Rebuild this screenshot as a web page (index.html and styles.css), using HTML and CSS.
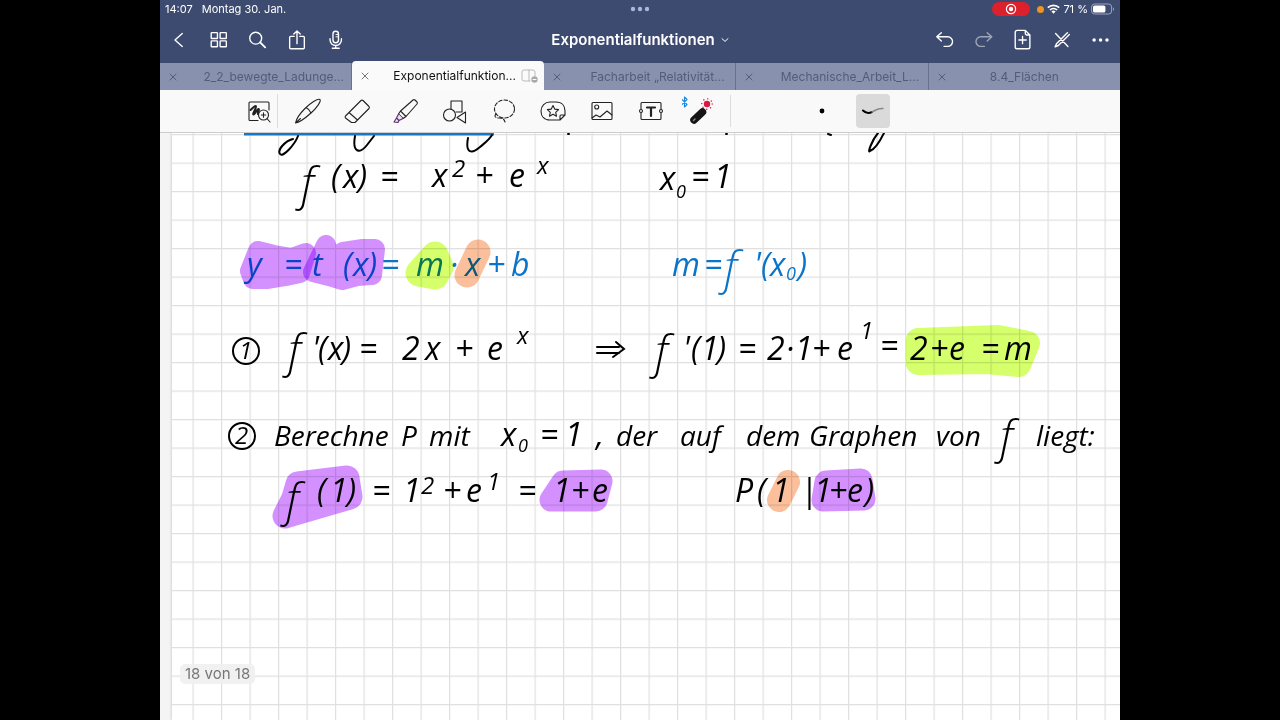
FILE: index.html
```html
<!DOCTYPE html>
<html lang="de">
  <head>
    <meta charset="utf-8" />
    <meta name="viewport" content="width=device-width, initial-scale=1.0" />
    <title>Exponentialfunktionen</title>
    <link rel="stylesheet" href="styles.css">
  </head>
  <body>
    <div id="app">
      <header>
        <div id="status">
          <div class="clock"><span>14:07</span><span>Montag 30. Jan.</span></div>
          <svg width="20" height="6" viewBox="0 0 20 6"><g fill="#a9b6e0"><circle cx="3" cy="3" r="2.2"/><circle cx="10" cy="3" r="2.2"/><circle cx="17" cy="3" r="2.2"/></g></svg>
          <div class="indicators">
            <span class="record"><svg width="12" height="12" viewBox="0 0 12 12"><circle cx="6" cy="6" r="4.6" fill="none" stroke="#fff" stroke-width="1.2"/><circle cx="6" cy="6" r="2.2" fill="#fff"/></svg></span>
            <span class="mic-dot"></span>
            <svg width="13" height="10" viewBox="0 0 13 10" fill="none" stroke="#fff" stroke-width="1.7"><path d="M.8 3.7a8.2 8.2 0 0 1 11.4 0M2.9 6a5.2 5.2 0 0 1 7.2 0"/><path d="M4.4 7.6a3 3 0 0 1 4.2 0L6.5 9.8z" fill="#fff" stroke="none"/></svg>
            <span>71 %</span>
            <svg width="24" height="12" viewBox="0 0 24 12"><rect x=".6" y="1" width="20" height="10" rx="3" fill="none" stroke="#9ba3bd"/><rect x="2" y="2.4" width="12.4" height="7.2" rx="1.6" fill="#fff"/><path d="M22 4.2c1.4.5 1.4 3.1 0 3.6z" fill="#9ba3bd"/></svg>
          </div>
        </div>

        <nav>
          <div class="actions">
            <button aria-label="Zurück"><svg viewBox="0 0 24 24"><path d="M14.500 5L6.500 12l8 7"/></svg></button>
            <button aria-label="Übersicht"><svg viewBox="0 0 24 24"><rect x="3.500" y="4" width="6.800" height="6.400" rx=".6"/><rect x="13.200" y="4" width="6.800" height="6.400" rx=".6"/><rect x="3.500" y="13" width="6.800" height="6.400" rx=".6"/><rect x="13.200" y="13" width="6.800" height="6.400" rx=".6"/></svg></button>
            <button aria-label="Suchen"><svg viewBox="0 0 24 24"><circle cx="9.500" cy="10" r="6.500"/><path d="M14.300 14.600l5.500 5.400" stroke-width="2"/></svg></button>
            <button aria-label="Teilen"><svg viewBox="0 0 24 24"><path d="M9 8H5a1 1 0 0 0-1 1V20.500a1 1 0 0 0 1 1h14a1 1 0 0 0 1-1V9a1 1 0 0 0-1-1H15M12 16V2.500M8.500 5.500L12 2.200 15.500 5.500"/></svg></button>
            <button aria-label="Aufnehmen"><svg viewBox="0 0 24 24"><rect x="8.700" y="2.500" width="6" height="12.500" rx="3"/><path d="M5.500 10.500v1.500a6.200 6 0 0 0 12.400 0v-1.500M11.700 18v3M8 21h7.500"/><path d="M12 6h2M12 8.500h2" stroke-width="1"/></svg></button>
          </div>
          <button class="title">Exponentialfunktionen <svg viewBox="0 0 8 8"><path d="M1 2.600L4 5.400l3-2.800"/></svg></button>
          <div class="actions">
            <button aria-label="Rückgängig"><svg viewBox="0 0 24 24"><path d="M8 4L3 8.500 8 13M3 8.500h12a5 5 0 0 1 0 10.500h-4"/></svg></button>
            <button aria-label="Wiederholen" disabled><svg viewBox="0 0 24 24"><path d="M15.500 4L20.500 8.500 15.500 13M20.500 8.500H8.500A5 5 0 0 0 8.500 19h4"/></svg></button>
            <button aria-label="Seite hinzufügen"><svg viewBox="0 0 24 24"><path d="M14.500 1.500H5.500A2 2 0 0 0 3.500 3.500v16a2 2 0 0 0 2 2h12a2 2 0 0 0 2-2V6.500zM14.500 1.500V5A1.500 1.500 0 0 0 16 6.500h3.500M11.500 8v8M7.500 12h8"/></svg></button>
            <button aria-label="Nur lesen"><svg viewBox="0 0 24 24"><path d="M5 5L18.500 19M4.500 19.500L6 16 17 5M8 18L19 7M4.500 19.500L8 18M17 5l1-1M19 7l1-1"/></svg></button>
            <button aria-label="Mehr"><svg viewBox="0 0 24 24" class="solid"><circle cx="4.500" cy="12" r="1.900"/><circle cx="11.500" cy="12" r="1.900"/><circle cx="18.500" cy="12" r="1.900"/></svg></button>
          </div>
        </nav>

        <div id="tabs">
          <div class="tab"><button aria-label="Schließen"><svg viewBox="0 0 8 8"><path d="M1 1l6 6M7 1L1 7"/></svg></button><a href="#">2_2_bewegte_Ladunge...</a></div>
          <div class="tab active"><button aria-label="Schließen"><svg viewBox="0 0 8 8"><path d="M1 1l6 6M7 1L1 7"/></svg></button><a href="#">Exponentialfunktion...</a>
            <svg class="split" viewBox="0 0 18 14"><path d="M9 12H3a2 2 0 0 1-2-2V3a2 2 0 0 1 2-2h9a2 2 0 0 1 2 2v4M8 1v11"/><circle cx="13.500" cy="10.500" r="3.200" fill="#aaa" stroke="none"/><path d="M12 10.500h3" stroke="#fff"/></svg></div>
          <div class="tab"><button aria-label="Schließen"><svg viewBox="0 0 8 8"><path d="M1 1l6 6M7 1L1 7"/></svg></button><a href="#">Facharbeit „Relativität...</a></div>
          <div class="tab"><button aria-label="Schließen"><svg viewBox="0 0 8 8"><path d="M1 1l6 6M7 1L1 7"/></svg></button><a href="#">Mechanische_Arbeit_L...</a></div>
          <div class="tab short"><button aria-label="Schließen"><svg viewBox="0 0 8 8"><path d="M1 1l6 6M7 1L1 7"/></svg></button><a href="#">8.4_Flächen</a></div>
        </div>
      </header>

      <div id="toolbar">
        <button class="zoom" aria-label="Zoomfenster"><svg viewBox="0 0 28 28"><path d="M13 23.500H5a1 1 0 0 1-1-1V6a1 1 0 0 1 1-1h18a1 1 0 0 1 1 1v7"/><path d="M5.500 13c2-2 5-5 5.500-3.500S7 17 8.500 17.500s3.500-6 5-5.500-1.500 4-.5 5" stroke-width="2"/><circle cx="18.500" cy="18" r="5"/><path d="M18.500 15.800v4.400M16.300 18h4.400M22 21.500l3 3.500"/></svg></button>
        <button aria-label="Stift"><svg viewBox="0 0 28 28"><path d="M1.500 26C2.500 21 6.500 16 11 11.500 16 6.500 24 1 26 2.500c1.500 2-4 9-9 13.500C12.500 20 6 25.500 1.500 26zM12 10.500c2 1 4 3 5 5.500M1.500 26l5-4.500"/></svg></button>
        <button aria-label="Radierer"><svg viewBox="0 0 28 28"><path d="M2.500 19L18 3.500a1.500 1.500 0 0 1 2 0l6 6a1.500 1.500 0 0 1 0 2L12 25.500H8.500L2.500 21a1.500 1.500 0 0 1 0-2zM6 15.500l8.500 7.500"/></svg></button>
        <button aria-label="Textmarker"><svg viewBox="0 0 28 28"><path d="M8.500 14L21 3a1.500 1.500 0 0 1 2 0l2 2a1.500 1.500 0 0 1 0 2L14 19.500zM8.500 14l5.500 5.500-3 2L6.500 17z"/><path d="M6.500 17L4.500 21l2.500 2.500 4-2M4.500 21L2 25l4 .5 1-2" stroke="#553069" fill="#ecdcf4"/></svg></button>
        <button aria-label="Formen"><svg viewBox="0 0 28 28"><path d="M10 12V4h11v11h-6"/><circle cx="8.500" cy="18" r="6"/><path d="M24.500 15v11L16 20.500z"/></svg></button>
        <button aria-label="Lasso"><svg viewBox="0 0 28 28"><ellipse cx="14.500" cy="12" rx="10" ry="9" stroke-dasharray="3.500 2"/><path d="M6 17c-2 2-1 4 3 4s5 1 6 4" stroke-dasharray="4 2"/></svg></button>
        <button aria-label="Elemente"><svg viewBox="0 0 28 28"><path d="M21 23H11c-6 0-9-4-9-9s4-9 9-9h6c6 0 9 4 9 9v4zM21 23v-4a1 1 0 0 1 1-1h4"/><path d="M14 8.500l1.700 3.600 3.900.5-2.900 2.700.8 3.900-3.500-1.900-3.500 1.900.8-3.900-2.900-2.700 3.900-.5z"/></svg></button>
        <button aria-label="Bild"><svg viewBox="0 0 28 28"><rect x="4" y="5.500" width="20" height="17" rx="1"/><circle cx="8.700" cy="10" r="2"/><path d="M4 21l4-3 4 2 7-6 5 4"/></svg></button>
        <button aria-label="Textfeld"><svg viewBox="0 0 28 28"><path d="M4 12V6.500a1 1 0 0 1 1-1h18a1 1 0 0 1 1 1V12M4 16v5.500a1 1 0 0 0 1 1h18a1 1 0 0 0 1-1V16"/><circle cx="4" cy="14" r="1.500"/><circle cx="24" cy="14" r="1.500"/><path d="M10 10.500h8M14 10.500v8.500" stroke-width="2.200"/></svg></button>
        <button class="laser" aria-label="Laserpointer">
          <svg viewBox="0 0 36 30"><path d="M0 3.500l5 5L2.500 11V1L5 3.500l-5 5" stroke="#1689e8"/><path d="M12 24L20.500 16" stroke="#151515" stroke-width="7.500"/><path d="M11.500 24.500l1.500-1.500" stroke="#888" stroke-width="1.500"/><circle cx="25" cy="8" r="3.200" fill="#dc1742" stroke="none"/><circle cx="25" cy="8" r="5.200" stroke="#dc1742" stroke-width="1.400" stroke-dasharray=".1 4"/></svg>
        </button>
        <span class="divider"></span>
        <button class="stroke first" aria-label="Punkt"><svg viewBox="0 0 28 28"><circle cx="14" cy="14" r="2.400" fill="#000" stroke="none"/></svg></button>
        <button class="stroke selected" aria-label="Spur"><svg viewBox="0 0 28 28"><path d="M4 13.500c3 3 6 3 9 1.500" stroke="#000" stroke-width="2"/><path d="M13 15c4-2 6-4 11-3.500" stroke="#888" stroke-width="1.500"/></svg></button>
      </div>

      <main>
        <svg id="page" viewBox="172 133 948 587">
          <defs>
            <pattern id="grid" x="192.500" y="162.500" width="28.500" height="28.500" patternUnits="userSpaceOnUse">
              <path d="M0 0H28.500M0 0V28.500" stroke="#e0e0e0" stroke-width="2.400" fill="none"/>
            </pattern>
          </defs>
          <rect x="172" y="133" width="948" height="587" fill="url(#grid)"/>

          <!-- end of the previous line, scrolled under the toolbar -->
          <path d="M244 134H494" stroke="#1478c4" stroke-width="3"/>
          <g class="pen">
            <path d="M298 136c-3 8-15 22-18 18s5-13 13-15M355 136c-3 17 5 18 12 9l7-9M468 138c-3 16 4 16 12 9 6-5 9-7 12-12M878 133c-6 7-11 21-8 18 6-2 11-12 14-18M568 134h1M726 134h1M828 134l3 1"/>
          </g>

          <g class="ink">
            <text class="tall" x="301" y="200">f</text>
            <text x="331 343 358 380" y="188">(x)=</text>
            <text x="432" y="187">x</text><text class="power" x="452" y="177">2</text>
            <text x="475 509" y="187">+e</text><text class="power" x="537" y="174">x</text>
            <text x="660" y="190">x</text><text class="sub" x="676" y="198">0</text>
            <text x="691 714" y="188">=1</text>

            <g class="blue">
              <text x="247 284 312 343 353 368 381" y="276">y=t(x)=</text>
              <text x="416 450 465 487 511" y="276">m·x+b</text>
              <text x="672 704" y="276">m=</text>
              <text class="tall" x="724" y="284">f</text>
              <text x="754 761 770" y="276">'(x</text><text class="sub" x="786" y="280">0</text><text x="798" y="276">)</text>
            </g>

            <circle cx="246" cy="351" r="13"/>
            <text class="number" x="239" y="359">1</text>
            <text class="tall" x="288" y="367">f</text>
            <text x="312 318 328 342 359" y="360">'(x)=</text>
            <text x="402 425 455 487" y="360">2x+e</text><text class="power" x="517" y="344">x</text>
            <path d="M597 347h22M597 353h22M616 342l8 7-11 8"/>
            <text class="tall" x="655" y="368">f</text>
            <text x="683 691 701 717 738" y="360">'(1)=</text>
            <text x="767 786 795 812 837" y="360">2·1+e</text><text class="power" x="860" y="339">1</text><text x="880" y="357">=</text>
            <text x="910 930 949 981 1004" y="360">2+e=m</text>

            <circle cx="242" cy="436" r="13"/>
            <text class="number" x="235" y="444">2</text>
            <text class="word" x="274" y="446">Berechne</text>
            <text class="word" x="401" y="446">P</text>
            <text class="word" x="429" y="446">mit</text>
            <text x="501" y="446">x</text><text class="sub" x="518" y="452">0</text>
            <text x="540 565 596" y="446">=1,</text>
            <text class="word" x="616" y="446">der</text>
            <text class="word" x="680" y="446">auf</text>
            <text class="word" x="746" y="446">dem</text>
            <text class="word" x="809" y="446">Graphen</text>
            <text class="word" x="936" y="446">von</text>
            <text class="tall" x="1000" y="453">f</text>
            <text class="word" x="1036" y="446">liegt:</text>

            <text class="tall" x="286" y="516">f</text>
            <text x="317 330 347 372" y="502">(1)=</text>
            <text x="403" y="502">1</text><text class="power" x="421" y="494">2</text>
            <text x="443 466" y="502">+e</text><text class="power" x="487" y="490">1</text>
            <text x="518 553 571 592" y="502">=1+e</text>
            <text x="735 757 772 800 814 829 847 865" y="502">P(1|1+e)</text>
          </g>

          <g class="marker">
            <path class="purple" d="M250 271l8-20 16 4 18 3 14-5-6 20-14 3-18 3-15 0z" stroke-width="20"/>
            <path class="purple" d="M313 272l13-27 4 17 13-10 20-3 12 0-3 26-15 1-15 4-13-4z" stroke-width="20"/>
            <path class="lime" d="M419 273l16-18 5 12-5 9z" stroke-width="27"/>
            <path class="orange" d="M467 275l11-23" stroke-width="25"/>
            <path class="lime" d="M918 340l80-3 30 6-9 22-32-3-69 1z" stroke-width="24"/>
            <path class="purple" d="M285 516l9-18 4-14 49-6 3 19-55 16z" stroke-width="25"/>
            <path class="purple" d="M551 500l12-18 38-1-5 19z" stroke-width="23"/>
            <path class="orange" d="M779 500l9-18" stroke-width="24"/>
            <path class="purple" d="M823 500l3-18 35-2 3 19z" stroke-width="23"/>
          </g>
        </svg>
        <div id="counter">18 von 18</div>
      </main>
    </div>
  </body>
</html>
```

FILE: styles.css
```css
* {
  box-sizing: border-box;
}
body {
  margin: 0;
  background: #000;
  font-family: Inter, "Liberation Sans", sans-serif;
}
button {
  display: flex;
  align-items: center;
  justify-content: center;
  border: none;
  background: none;
  padding: 0;
  color: inherit;
  font-family: inherit;
}
svg {
  fill: none;
  flex: none;
}
button svg,
.split {
  stroke: currentColor;
  stroke-linecap: round;
  stroke-linejoin: round;
}
#app {
  width: 75%;
  height: 100vh;
  margin: 0 auto;
  display: flex;
  flex-direction: column;
  overflow: hidden;
}
header {
  background: #3e4b70;
  color: #fff;
}

/* status bar */
#status {
  display: grid;
  grid-template-columns: 1fr auto 1fr;
  align-items: center;
  height: 18px;
  padding: 0 5px;
  font-size: 11px;
}
.clock {
  display: flex;
  gap: 9px;
}
.indicators {
  display: flex;
  align-items: center;
  justify-content: flex-end;
  gap: 3px;
}
.record {
  display: flex;
  align-items: center;
  justify-content: center;
  width: 38px;
  height: 14px;
  border-radius: 7px;
  background: #dc202c;
  margin-right: 4px;
}
.mic-dot {
  width: 7px;
  height: 7px;
  border-radius: 50%;
  background: #ee9420;
}

/* navigation */
nav {
  display: grid;
  grid-template-columns: 1fr auto 1fr;
  align-items: center;
  height: 43px;
}
.actions {
  display: flex;
}
.actions:last-child {
  justify-content: flex-end;
}
.actions button {
  width: 39px;
  height: 40px;
}
.actions button:disabled {
  opacity: 0.5;
}
.actions svg {
  width: 22px;
  height: 22px;
  stroke-width: 1.5;
}
.actions .solid {
  fill: currentColor;
  stroke: none;
}
.title {
  gap: 6px;
  font-size: 15px;
  font-weight: 600;
}
.title svg {
  width: 8px;
  height: 8px;
}

/* tabs */
#tabs {
  display: flex;
  align-items: flex-end;
  height: 29px;
}
.tab {
  flex: 1;
  min-width: 0;
  height: 27px;
  display: flex;
  align-items: center;
  background: #8891ae;
  color: #545c7c;
  border-right: 1px solid #66708f;
}
.tab:last-child {
  border-right: none;
}
.tab button {
  width: 26px;
  height: 26px;
}
.tab button svg {
  width: 8px;
  height: 8px;
}
.tab a {
  flex: 1;
  min-width: 0;
  padding: 0 4px 0 14px;
  color: inherit;
  font-size: 12px;
  text-align: center;
  text-decoration: none;
  white-space: nowrap;
  overflow: hidden;
}
.tab.short a {
  padding: 0 26px 0 0;
}
.tab.active {
  height: 29px;
  border: none;
  border-radius: 4px 4px 0 0;
  background: #fafafa;
  color: #111;
}
.tab.active button {
  color: #777;
}
.split {
  width: 18px;
  height: 14px;
  margin-right: 5px;
  color: #bbb;
}

/* tools */
#toolbar {
  display: flex;
  align-items: center;
  height: 43px;
  padding-left: 74px;
  background: #f9f9f9;
  border-bottom: 1px solid #ccc;
  color: #222;
}
#toolbar button {
  width: 49px;
  height: 34px;
}
#toolbar svg {
  width: 28px;
  height: 28px;
  stroke-width: 1.1;
}
#toolbar .zoom {
  width: 36px;
  margin: 0 5px 0 7px;
  border-right: 1px solid #ddd;
  box-sizing: content-box;
}
#toolbar .laser svg {
  width: 36px;
  height: 30px;
}
.divider {
  width: 1px;
  height: 32px;
  margin-left: 6px;
  background: #ddd;
}
#toolbar .stroke {
  width: 34px;
  margin-left: 17px;
  border-radius: 4px;
}
#toolbar .first {
  margin-left: 74px;
}
#toolbar .selected {
  background: #dadadb;
}

/* note page */
main {
  position: relative;
  flex: 1;
  min-height: 0;
  padding-left: 12px;
  background: #f4f4f4;
  overflow: hidden;
}
#page {
  display: block;
  width: 100%;
  background: #fff;
  box-shadow: 0 0 3px #bbb;
}
.ink {
  fill: #000;
  font-family: "Open Sans", sans-serif;
  font-style: italic;
  font-size: 32px;
}
.ink circle,
.ink path,
.pen {
  fill: none;
  stroke: #000;
  stroke-width: 2;
  stroke-linecap: round;
}
.ink .tall {
  font-size: 46px;
  font-weight: 300;
}
.ink .power,
.ink .number {
  font-size: 24px;
}
.ink .sub {
  font-size: 18px;
}
.ink .word {
  font-size: 28px;
}
.ink .blue {
  fill: #0c74c8;
}
.marker path {
  stroke-linecap: round;
  stroke-linejoin: round;
  mix-blend-mode: multiply;
}
.purple {
  fill: #d490ff;
  stroke: #d490ff;
}
.lime {
  fill: #d5ff6b;
  stroke: #d5ff6b;
}
.orange {
  stroke: #fbc09b;
}
#counter {
  position: absolute;
  left: 20px;
  bottom: 36px;
  padding: 0 5px;
  border-radius: 5px;
  background: rgba(240, 240, 240, 0.9);
  color: #777;
  font-size: 15px;
  line-height: 20px;
}
```
